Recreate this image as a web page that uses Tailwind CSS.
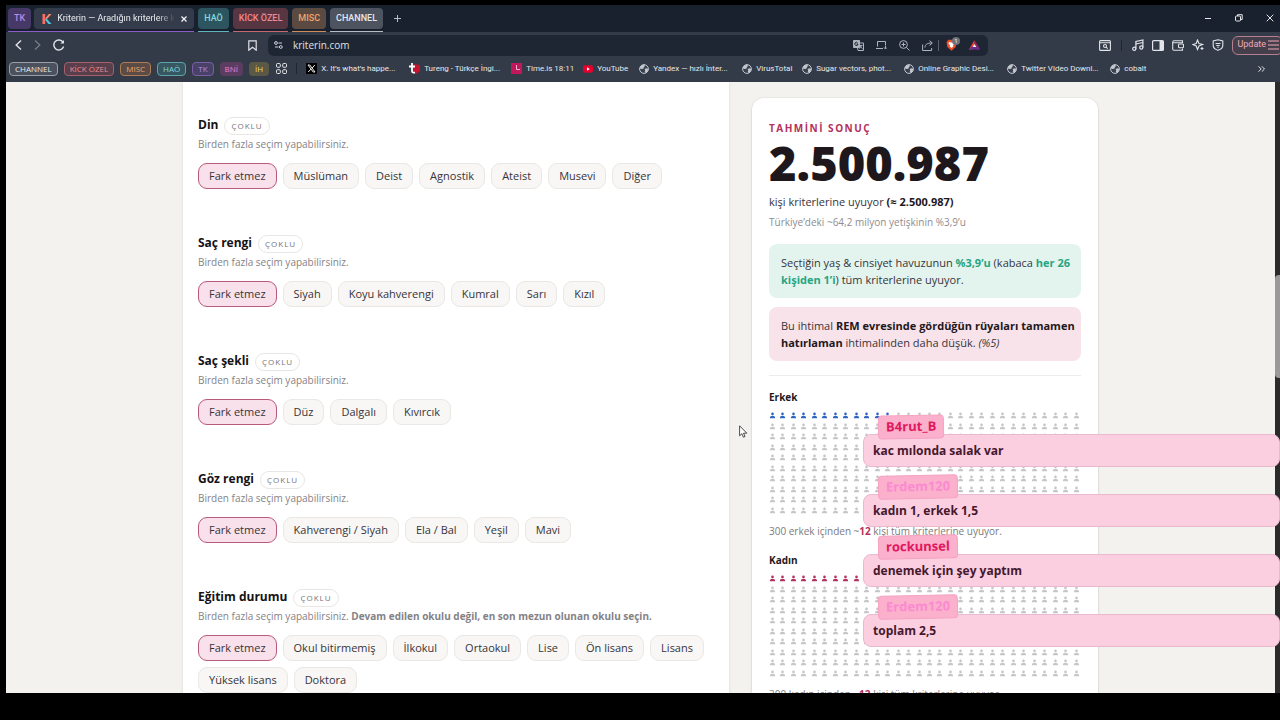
<!DOCTYPE html>
<html lang="tr">
<head>
  <meta charset="UTF-8">
  <meta name="viewport" content="width=device-width,initial-scale=1.0">
  <title>Kriterin — Aradığın kriterlere kaç kişi uyuyor?</title>
  <script src="https://cdn.jsdelivr.net/npm/@tailwindcss/browser@4"></script>
</head>
<body class="h-screen overflow-hidden bg-black pt-[5px] pb-[27px] pl-[6px] font-['Open_Sans','Noto_Sans',sans-serif]">
  <!-- Shared icons -->
  <svg class="hidden">
    <symbol id="person" viewBox="0 0 8 8">
      <circle cx="4" cy="2.2" r="1.5" />
      <path d="M1 7.2C1 5.2 2.2 4.4 4 4.4s3 .8 3 2.8z" />
    </symbol>
    <symbol id="globe" viewBox="0 0 10 10">
      <circle cx="5" cy="5" r="4.4" fill="#3a4250" stroke="#c3c8cf" stroke-width="1" />
      <path d="M1 3.4C2 1.6 3.4.8 5.2.8L6 2 4.8 3.2 4.6 4.6 3 5 1 4.6zM5.6 5l2-.8L9.2 5C9 7 8 8.3 6.6 8.9L5.8 7.4 6.2 6.2z" fill="#c3c8cf" />
    </symbol>
  </svg>

  <div class="relative flex h-full flex-col overflow-hidden bg-[#333b49]">
    <!-- Tab strip -->
    <header class="flex h-[27px] shrink-0 items-start bg-[#19212f] pt-[3px] pl-[2px] font-['Roboto','Open_Sans',sans-serif] text-[9px] font-medium">
      <div class="flex gap-[4px]">
        <div class="flex gap-[3px] border-b border-[#8b5cc7] pb-[2px]">
          <button class="h-[21px] rounded bg-[#463867] px-[6px] text-[#b58be6]">TK</button>
          <div class="flex h-[21px] w-[160px] items-center rounded bg-[#343c4b] pr-[7px] pl-[8px] text-[#e9ebee]">
            <svg class="h-[10px] w-[10px] shrink-0" viewBox="0 0 10 11">
              <path d="M0 0h3v11H0z" fill="#ff6b62" />
              <path d="M7 0h3L5 5.5 3 5z" fill="#f58a6a" />
              <path d="M3 5l2 .5L10 11H6.5L3 6.5z" fill="#4cc3d9" />
            </svg>
            <span class="ml-[5px] flex-1 overflow-hidden text-[9px] font-normal whitespace-nowrap mask-r-from-85%">Kriterin — Aradığın kriterlere kaç</span>
            <button class="ml-[6px]" aria-label="Sekmeyi kapat">
              <svg class="size-[6px]" viewBox="0 0 6 6" stroke="#f2f3f5" stroke-width="1.3"><path d="M.5.5l5 5M5.5.5l-5 5" /></svg>
            </button>
          </div>
        </div>
        <div class="border-b border-[#5fb5bb] pb-[2px]"><button class="h-[21px] rounded bg-[#2c5560] px-[6px] text-[#82d8dc]">HAÖ</button></div>
        <div class="border-b border-[#c76571] pb-[2px]"><button class="h-[21px] rounded bg-[#583641] px-[6px] text-[#f08791]">KİCK ÖZEL</button></div>
        <div class="border-b border-[#d08d5c] pb-[2px]"><button class="h-[21px] rounded bg-[#5a4a42] px-[6px] text-[#f2a468]">MISC</button></div>
        <div class="border-b border-[#b9bdc3] pb-[2px]"><button class="h-[21px] rounded bg-[#4d545f] px-[6px] text-[#e6e8ea]">CHANNEL</button></div>
      </div>
      <button class="mt-[7px] ml-[11px]" aria-label="Yeni sekme">
        <svg class="size-[7px]" viewBox="0 0 7 7" stroke="#b9bfc9"><path d="M0 3.5h7M3.5 0v7" /></svg>
      </button>
      <div class="mt-[6px] mr-[6px] ml-auto flex items-center gap-[23px]">
        <button aria-label="Küçült"><svg class="size-[8px]" viewBox="0 0 8 8" stroke="#e6e8ea"><path d="M1 4.5h6" /></svg></button>
        <button aria-label="Geri yükle"><svg class="size-[8px]" viewBox="0 0 8 8" fill="none" stroke="#e6e8ea"><rect x=".5" y="2" width="5" height="5" rx="1" /><path d="M2.5 2V.7h4.7v4.8H5.5" /></svg></button>
        <button aria-label="Kapat"><svg class="size-[8px]" viewBox="0 0 8 8" stroke="#e6e8ea"><path d="M.7.7l6.6 6.6M7.3.7L.7 7.3" /></svg></button>
      </div>
    </header>

    <!-- Address bar -->
    <nav class="flex h-[26px] shrink-0 items-center pl-[9px] text-[#e1e4e8]">
      <div class="flex items-center gap-[12px]">
        <button aria-label="Geri"><svg class="h-[10px] w-[7px]" viewBox="0 0 7 10" fill="none" stroke="currentColor" stroke-width="1.4"><path d="M6 .5L1.2 5 6 9.5" /></svg></button>
        <button aria-label="İleri"><svg class="h-[10px] w-[7px]" viewBox="0 0 7 10" fill="none" stroke="#757c88" stroke-width="1.3"><path d="M1 .5L5.8 5 1 9.5" /></svg></button>
        <button aria-label="Yenile"><svg class="size-[12px]" viewBox="0 0 12 12" fill="none" stroke="currentColor" stroke-width="1.4"><path d="M10.6 7.5A5 5 0 1 1 10 3.2" /><path d="M11 1v3.6H7.4z" fill="currentColor" stroke="none" /></svg></button>
      </div>
      <button class="ml-[183px]" aria-label="Yer imi"><svg class="h-[11px] w-[9px]" viewBox="0 0 9 11" fill="none" stroke="currentColor" stroke-width="1.2"><path d="M.8.8h7.4v9.4L4.5 7.2.8 10.2z" /></svg></button>
      <div class="ml-[11px] flex h-[21px] max-w-[720px] flex-1 items-center rounded-md bg-[#1f2633] px-[6px]">
        <svg class="h-[8px] w-[9px] shrink-0" viewBox="0 0 9 8" fill="none" stroke="#cfd3d9"><circle cx="2" cy="2" r="1.4" /><path d="M4.5 2H8M1 6h3.5" /><circle cx="6.8" cy="6" r="1.4" /></svg>
        <input type="text" value="kriterin.com" aria-label="Adres" class="ml-[10px] min-w-0 flex-1 bg-transparent text-[10px] text-[#dfe2e6] outline-none">
        <div class="flex items-center gap-[12px] text-[#aeb4be]">
          <svg class="size-[11px]" viewBox="0 0 11 11" fill="none" stroke="currentColor"><path d="M.5.5h6v7h-6z" fill="currentColor" /><path d="M7 3h3.5v7.5H5L4.5 8M6.5 5.5h3M8 5v1c0 1-1 2-2 2.5M7 6.5l2.5 2" /><path d="M4.6 2.8A1.6 1.6 0 1 0 5 4H3.5" stroke="#1f2633" /></svg>
          <svg class="h-[10px] w-[11px]" viewBox="0 0 11 10" fill="none" stroke="currentColor"><path d="M1.5 6.5v-5h8v3.5M0 8.5h7M9.5 5.5v3M8 7.5L9.5 9 11 7.5" /></svg>
          <svg class="size-[11px]" viewBox="0 0 11 11" fill="none" stroke="currentColor"><circle cx="4.5" cy="4.5" r="3.9" /><path d="M7.3 7.3l3.2 3.2M2.5 4.5h4M4.5 2.5v4" /></svg>
          <svg class="size-[11px]" viewBox="0 0 11 11" fill="none" stroke="currentColor"><path d="M.6 4.5v6h9V8M3 7.5c0-3 2-4.5 7-4.5M7.5.6L10.3 3 7.5 5.5" /></svg>
        </div>
        <div class="ml-[5px] h-[11px] w-px bg-[#5a616e]"></div>
        <div class="relative ml-[7px]">
          <svg class="h-[12px] w-[11px]" viewBox="0 0 11 12"><path d="M2.5.8h6L10.5 3l-.8 5-4.2 3.7L1.3 8 .5 3z" fill="#ee4c24" /><path d="M3 3l2.5.6L8 3l.5 1.5L7 6.5l.3 1-1.8 1.5-1.8-1.5.3-1L2.5 4.5z" fill="#fff" /></svg>
          <span class="absolute -top-[2px] -right-[3px] flex size-[8px] items-center justify-center rounded-full bg-[#6d737d] text-[6px] text-white">1</span>
        </div>
        <svg class="mr-[2px] ml-[12px] h-[10px] w-[11px]" viewBox="0 0 11 10"><path d="M5.5 0L0 9.5h4L5.5 5z" fill="#ff4724" /><path d="M5.5 0L11 9.5H7L5.5 5z" fill="#9e1f63" /><path d="M0 9.5h11L8.5 6.5h-6z" fill="#662d91" /><path d="M5.5 4L7.2 7H3.8z" fill="#fff" /></svg>
      </div>
      <div class="ml-auto flex items-center gap-[8px]">
        <svg class="h-[11px] w-[12px]" viewBox="0 0 12 11" fill="none" stroke="currentColor" stroke-width="1.1"><rect x=".6" y=".6" width="10.8" height="9.8" rx="1" /><path d="M.6 2.7h10.8M7.2 7.2l1.5 1.5" /><circle cx="6" cy="6" r="1.5" /></svg>
        <div class="mx-[2px] h-[11px] w-px bg-[#20262f]"></div>
        <svg class="h-[12px] w-[12px]" viewBox="0 0 12 12" fill="none" stroke="currentColor" stroke-width="1.2"><circle cx="2.3" cy="9.7" r="1.6" /><circle cx="9.3" cy="8.5" r="1.6" /><path d="M3.9 9.7V2.5L10.9 1v7.5M3.9 5l7-1.5" /></svg>
        <svg class="h-[11px] w-[12px]" viewBox="0 0 12 11" fill="none" stroke="currentColor" stroke-width="1.2"><rect x=".6" y=".6" width="10.8" height="9.8" rx="1" /><path d="M7.5 1h4v9h-4z" fill="currentColor" stroke="none" /></svg>
        <svg class="h-[11px] w-[12px]" viewBox="0 0 12 11" fill="none" stroke="currentColor" stroke-width="1.1"><path d="M10.5 3V.8H2A1.3 1.3 0 0 0 .7 2v7c0 .7.5 1.2 1.2 1.2h8.6V8.5M.7 2.8h9.8" /><rect x="6.5" y="4" width="5" height="3.8" rx="1" /></svg>
        <svg class="size-[12px]" viewBox="0 0 12 12" fill="none" stroke="currentColor" stroke-width="1.1"><path d="M5.5 1L7 4.5l3.5 1L7 7l-1.5 3.5L4.2 7 .8 5.5l3.4-1z" /><path d="M10 8v3M8.5 9.5h3" /></svg>
        <svg class="h-[12px] w-[12px]" viewBox="0 0 11 12" fill="none" stroke="currentColor" stroke-width="1.1"><path d="M5.5.7L10.3 2v4.5c0 2.3-2.3 4-4.8 4.8C3 10.5.7 8.8.7 6.5V2z" /><path d="M3 4.5h5M3.8 6.5h3.4M4.8 8.2h1.4" /></svg>
        <button class="-mr-[3px] flex h-[19px] items-center gap-[2px] rounded-md border border-[#b5808f] bg-[#453e4b] pr-[3px] pl-[4px] font-['Roboto','Open_Sans',sans-serif] text-[9px] text-[#f0a9bb]">
          Update
          <svg class="h-[10px] w-[11px]" viewBox="0 0 11 10" stroke="currentColor"><path d="M0 1h11M0 5h11M0 9h11" /></svg>
        </button>
      </div>
    </nav>

    <!-- Bookmarks -->
    <nav class="flex h-[24px] shrink-0 items-center pb-[3px] pl-[3px] text-[8px] whitespace-nowrap text-[#e6e8ea]">
      <div class="flex gap-[6px] font-medium">
        <a href="#" class="flex h-[14px] items-center rounded-sm border border-[#9ba0a8] bg-[#4b525d] px-[5px]">CHANNEL</a>
        <a href="#" class="flex h-[14px] items-center rounded-sm border border-[#a5606c] bg-[#583f4b] px-[5px] text-[#f08791]">KİCK ÖZEL</a>
        <a href="#" class="flex h-[14px] items-center rounded-sm border border-[#b07c58] bg-[#5a4b45] px-[5px] text-[#f2a468]">MISC</a>
        <a href="#" class="flex h-[14px] items-center rounded-sm border border-[#5aa5ac] bg-[#365761] px-[5px] text-[#82d8dc]">HAÖ</a>
        <a href="#" class="flex h-[14px] items-center rounded-sm border border-[#7a5fa5] bg-[#4a4168] px-[5px] text-[#b58be6]">TK</a>
        <a href="#" class="flex h-[14px] items-center rounded-sm bg-[#5d3c62] px-[5px] text-[#f07fc8]">BNİ</a>
        <a href="#" class="flex h-[14px] items-center rounded-sm bg-[#5b5846] px-[6px] text-[#f0dc62]">İH</a>
      </div>
      <svg class="ml-[7px] size-[11px] shrink-0" viewBox="0 0 11 11" fill="none" stroke="currentColor"><rect x=".5" y=".5" width="3.8" height="3.8" rx="1" /><rect x="6.7" y=".5" width="3.8" height="3.8" rx="1" /><rect x=".5" y="6.7" width="3.8" height="3.8" rx="1" /><rect x="6.7" y="6.7" width="3.8" height="3.8" rx="1" /></svg>
      <div class="ml-[9px] h-[11px] w-px bg-[#20262f]"></div>
      <div class="ml-[9px] flex gap-[14px] font-['Roboto','Open_Sans',sans-serif]">
        <a href="#" class="flex w-[89px] items-center gap-[4px]">
          <svg class="size-[11px] shrink-0" viewBox="0 0 11 11"><path d="M0 0h11v11H0z" /><path d="M2 2h1.8L9 9H7.2zM8.8 2L6 5.2M5 6L2.2 9" fill="none" stroke="#fff" stroke-width=".9" /></svg>
          X. It’s what’s happe...
        </a>
        <a href="#" class="flex w-[88px] items-center gap-[4px]">
          <svg class="size-[11px] shrink-0" viewBox="0 0 11 11"><path d="M4 1l7 1v6l-4 3-3-2z" fill="#c4122f" /><path d="M3 0v8c0 1.5 1.5 2 3 1.5M0 3.5h6" fill="none" stroke="#fff" stroke-width="1.8" /></svg>
          Tureng - Türkçe İngi...
        </a>
        <a href="#" class="flex w-[58px] items-center gap-[4px]">
          <svg class="size-[11px] shrink-0" viewBox="0 0 11 11"><path d="M0 0h11v11H0z" fill="#c2185b" /><path d="M5.5 2v4.5H9" fill="none" stroke="#f5b8cf" /></svg>
          Time.is 18:11
        </a>
        <a href="#" class="flex w-[42px] items-center gap-[4px]">
          <svg class="h-[8px] w-[10px] shrink-0" viewBox="0 0 11 8"><rect width="11" height="8" rx="2" fill="#e6002d" /><path d="M4.4 2.2L7.5 4 4.4 5.8z" fill="#fff" /></svg>
          YouTube
        </a>
        <a href="#" class="flex w-[89px] items-center gap-[4px]"><svg class="size-[10px] shrink-0"><use href="#globe" /></svg>Yandex — hızlı İnter...</a>
        <a href="#" class="flex w-[46px] items-center gap-[4px]"><svg class="size-[10px] shrink-0"><use href="#globe" /></svg>VirusTotal</a>
        <a href="#" class="flex w-[88px] items-center gap-[4px]"><svg class="size-[10px] shrink-0"><use href="#globe" /></svg>Sugar vectors, phot...</a>
        <a href="#" class="flex w-[89px] items-center gap-[4px]"><svg class="size-[10px] shrink-0"><use href="#globe" /></svg>Online Graphic Desi...</a>
        <a href="#" class="flex w-[89px] items-center gap-[4px]"><svg class="size-[10px] shrink-0"><use href="#globe" /></svg>Twitter Video Downl...</a>
        <a href="#" class="flex items-center gap-[4px]"><svg class="size-[10px] shrink-0"><use href="#globe" /></svg>cobalt</a>
      </div>
      <button class="mr-[15px] ml-auto" aria-label="Diğer yer imleri"><svg class="h-[6px] w-[7px]" viewBox="0 0 7 6" fill="none" stroke="currentColor"><path d="M.5.3L3.2 3 .5 5.7M3.8.3L6.5 3 3.8 5.7" /></svg></button>
    </nav>

    <!-- Page -->
    <div class="flex min-h-0 flex-1">
      <main class="flex flex-1 justify-center gap-[23px] overflow-hidden bg-[#f3f2ef]">
        <form id="criteria" class="w-[546px] self-start bg-white px-[15px] pt-[33px] pb-10 text-[#37343a] shadow-sm"></form>

        <aside class="mt-[16px] w-[346px] self-start rounded-xl bg-white px-[17px] pt-[22px] pb-10 text-[11px] text-[#37343a] shadow-sm ring-1 ring-black/3">
          <h2 class="text-[10px] leading-[16px] font-bold tracking-[1.5px] text-[#b5305c]">TAHMİNİ SONUÇ</h2>
          <p class="text-[47px] leading-[54px] font-extrabold text-[#1e181c]">2.500.987</p>
          <p class="mt-[2px] leading-[20px]">kişi kriterlerine uyuyor <b class="text-[#1e181c]">(≈ 2.500.987)</b></p>
          <p class="text-[10px] leading-[20px] text-[#8f8c90]">Türkiye’deki ~64,2 milyon yetişkinin %3,9’u</p>
          <p class="mt-[12px] rounded-lg bg-[#e3f4ef] py-[10px] pr-[4px] pl-[12px] leading-[17px]">Seçtiğin yaş &amp; cinsiyet havuzunun <b class="text-[#27a580]">%3,9’u</b> (kabaca <b class="text-[#27a580]">her 26 kişiden 1’i</b>) tüm kriterlerine uyuyor.</p>
          <p class="mt-[9px] rounded-lg bg-[#f8e3ea] py-[10px] pr-[4px] pl-[12px] leading-[17px]">Bu ihtimal <b class="text-[#1e181c]">REM evresinde gördüğün rüyaları tamamen hatırlaman</b> ihtimalinden daha düşük. <i>(%5)</i></p>
          <hr class="mt-[14px] border-[#ececea]">
          <h3 class="mt-[13px] text-[10px] leading-[16px] font-bold text-[#1e181c]">Erkek</h3>
          <div class="mt-[7px] -mr-[2px] grid h-[105px] grid-cols-30 text-[#2f66c2]" data-people="12"></div>
          <p class="mt-[6px] mb-[13px] text-[10px] leading-[16px] text-[#7d7a7e]">300 erkek içinden ~<b class="text-[#b5305c]">12</b> kişi tüm kriterlerine uyuyor.</p>
          <h3 class="text-[10px] leading-[16px] font-bold text-[#1e181c]">Kadın</h3>
          <div class="mt-[7px] -mr-[2px] grid h-[105px] grid-cols-30 text-[#b5305c]" data-people="12"></div>
          <p class="mt-[6px] text-[10px] leading-[16px] text-[#7d7a7e]">300 kadın içinden ~<b class="text-[#b5305c]">12</b> kişi tüm kriterlerine uyuyor.</p>
        </aside>
      </main>
      <!-- Scrollbar -->
      <div class="flex w-[5px] flex-col bg-[#2b2b2b] pt-[193px]"><div class="h-[103px] rounded-l bg-[#9a9a9a]"></div></div>
    </div>

    <!-- Chat overlay -->
    <ul class="absolute right-0 bottom-[46px] flex w-[417px] flex-col gap-[8px] font-bold text-[#45182d]">
      <li>
        <span class="relative z-10 ml-[15px] flex h-[24px] w-fit -rotate-1 items-center rounded border border-[#f5a3c2] bg-[#fbb0cc] px-[7px] text-[13px] text-[#e0185e]">B4rut_B</span>
        <p class="-mt-[5px] flex h-[33px] items-center rounded-lg border border-[#eab9cd] bg-[#fbcfe0] px-[9px] text-[12px]">kac mılonda salak var</p>
      </li>
      <li>
        <span class="relative z-10 ml-[15px] flex h-[24px] w-fit -rotate-1 items-center rounded border border-[#f5a3c2] bg-[#fbb0cc] px-[7px] text-[13px] text-[#fb8ad0]">Erdem120</span>
        <p class="-mt-[5px] flex h-[33px] items-center rounded-lg border border-[#eab9cd] bg-[#fbcfe0] px-[9px] text-[12px]">kadın 1, erkek 1,5</p>
      </li>
      <li>
        <span class="relative z-10 ml-[15px] flex h-[24px] w-fit -rotate-1 items-center rounded border border-[#f5a3c2] bg-[#fbb0cc] px-[7px] text-[13px] text-[#e0185e]">rockunsel</span>
        <p class="-mt-[5px] flex h-[33px] items-center rounded-lg border border-[#eab9cd] bg-[#fbcfe0] px-[9px] text-[12px]">denemek için şey yaptım</p>
      </li>
      <li>
        <span class="relative z-10 ml-[15px] flex h-[24px] w-fit -rotate-1 items-center rounded border border-[#f5a3c2] bg-[#fbb0cc] px-[7px] text-[13px] text-[#fb8ad0]">Erdem120</span>
        <p class="-mt-[5px] flex h-[33px] items-center rounded-lg border border-[#eab9cd] bg-[#fbcfe0] px-[9px] text-[12px]">toplam 2,5</p>
      </li>
    </ul>

    <!-- Mouse pointer -->
    <svg class="absolute top-[420px] left-[733px] h-[13px] w-[9px]" viewBox="0 0 9 13"><path d="M.6.8v10l2.3-2.1 1.5 3.5 1.6-.7L4.5 8.2h3.3z" fill="#fff" stroke="#222" stroke-width=".8" /></svg>
  </div>

  <script>
    const groups = [
      { title: 'Din', options: ['Müslüman', 'Deist', 'Agnostik', 'Ateist', 'Musevi', 'Diğer'] },
      { title: 'Saç rengi', options: ['Siyah', 'Koyu kahverengi', 'Kumral', 'Sarı', 'Kızıl'] },
      { title: 'Saç şekli', options: ['Düz', 'Dalgalı', 'Kıvırcık'] },
      { title: 'Göz rengi', options: ['Kahverengi / Siyah', 'Ela / Bal', 'Yeşil', 'Mavi'] },
      {
        title: 'Eğitim durumu',
        note: 'Devam edilen okulu değil, en son mezun olunan okulu seçin.',
        options: ['Okul bitirmemiş', 'İlkokul', 'Ortaokul', 'Lise', 'Ön lisans', 'Lisans', 'Yüksek lisans', 'Doktora']
      }
    ];

    document.getElementById('criteria').innerHTML = groups.map((group) => `
      <section class="mb-[44px]">
        <div class="flex h-[20px] items-center gap-[6px]">
          <h3 class="text-[12px] font-bold text-[#151214]">${group.title}</h3>
          <span class="mt-[1px] flex h-[18px] items-center rounded-full border border-[#e8e7e4] px-[6px] text-[8px] tracking-[1px] text-[#77747a]">ÇOKLU</span>
        </div>
        <p class="mt-[1px] text-[10px] leading-[16px] text-[#858286]">Birden fazla seçim yapabilirsiniz. ${group.note ? `<b>${group.note}</b>` : ''}</p>
        <div class="mt-[11px] flex flex-wrap gap-[6px] text-[11px]">
          <button type="button" class="h-[26px] rounded-[9px] border border-[#b8587d] bg-[#f8e1ea] px-[10px]">Fark etmez</button>
          ${group.options.map((option) => `<button type="button" class="h-[26px] rounded-[9px] border border-[#e9e8e4] bg-[#f8f7f5] px-[10px]">${option}</button>`).join('')}
        </div>
      </section>
    `).join('');

    // 300 people per grid, the matching ones take the grid's colour
    document.querySelectorAll('[data-people]').forEach((grid) => {
      const active = Number(grid.dataset.people);
      for (let i = 0; i < 300; i++) {
        const color = i < active ? 'fill-current' : 'fill-[#c6c5c7]';
        grid.insertAdjacentHTML('beforeend', `<svg class="size-[7px] ${color}"><use href="#person" /></svg>`);
      }
    });
  </script>
</body>
</html>
